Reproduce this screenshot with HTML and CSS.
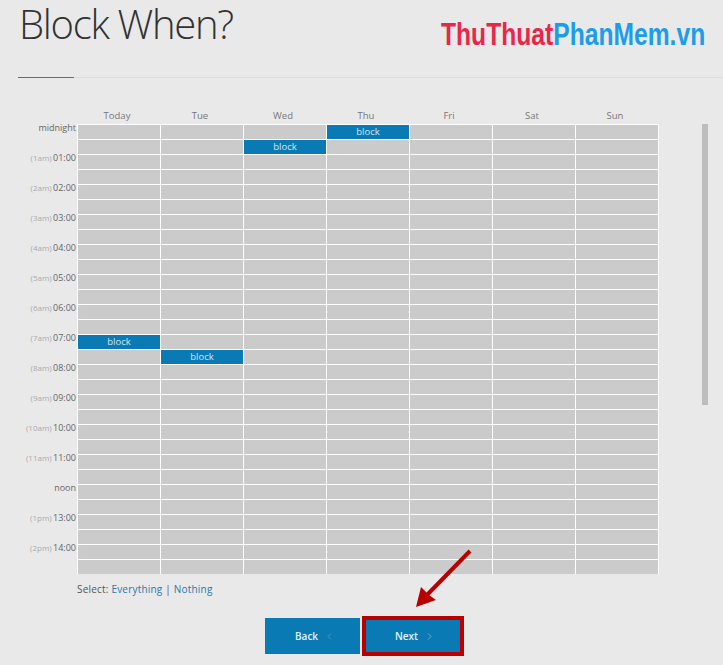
FILE: index.html
```html
<!DOCTYPE html>
<html lang="en">
<head>
<meta charset="utf-8">
<title>Block When?</title>
<link rel="stylesheet" href="styles.css">
</head>
<body>
<header class="head">
  <h1 class="title">Block When?</h1>
  <div class="logo"><span class="logo-red">ThuThuat</span><span class="logo-blue">PhanMem.vn</span></div>
</header>
<main class="sched">
  <div class="days">
    <span>Today</span><span>Tue</span><span>Wed</span><span>Thu</span><span>Fri</span><span>Sat</span><span>Sun</span>
  </div>
  <div class="body">
    <div class="times">
      <div class="t">midnight</div>
      <div class="t"><small>(1am)</small> 01:00</div>
      <div class="t"><small>(2am)</small> 02:00</div>
      <div class="t"><small>(3am)</small> 03:00</div>
      <div class="t"><small>(4am)</small> 04:00</div>
      <div class="t"><small>(5am)</small> 05:00</div>
      <div class="t"><small>(6am)</small> 06:00</div>
      <div class="t"><small>(7am)</small> 07:00</div>
      <div class="t"><small>(8am)</small> 08:00</div>
      <div class="t"><small>(9am)</small> 09:00</div>
      <div class="t"><small>(10am)</small> 10:00</div>
      <div class="t"><small>(11am)</small> 11:00</div>
      <div class="t">noon</div>
      <div class="t"><small>(1pm)</small> 13:00</div>
      <div class="t"><small>(2pm)</small> 14:00</div>
    </div>
    <div class="grid">
      <i></i><i></i><i></i><b>block</b><i></i><i></i><i></i>
      <i></i><i></i><b>block</b><i></i><i></i><i></i><i></i>
      <i></i><i></i><i></i><i></i><i></i><i></i><i></i>
      <i></i><i></i><i></i><i></i><i></i><i></i><i></i>
      <i></i><i></i><i></i><i></i><i></i><i></i><i></i>
      <i></i><i></i><i></i><i></i><i></i><i></i><i></i>
      <i></i><i></i><i></i><i></i><i></i><i></i><i></i>
      <i></i><i></i><i></i><i></i><i></i><i></i><i></i>
      <i></i><i></i><i></i><i></i><i></i><i></i><i></i>
      <i></i><i></i><i></i><i></i><i></i><i></i><i></i>
      <i></i><i></i><i></i><i></i><i></i><i></i><i></i>
      <i></i><i></i><i></i><i></i><i></i><i></i><i></i>
      <i></i><i></i><i></i><i></i><i></i><i></i><i></i>
      <i></i><i></i><i></i><i></i><i></i><i></i><i></i>
      <b>block</b><i></i><i></i><i></i><i></i><i></i><i></i>
      <i></i><b>block</b><i></i><i></i><i></i><i></i><i></i>
      <i></i><i></i><i></i><i></i><i></i><i></i><i></i>
      <i></i><i></i><i></i><i></i><i></i><i></i><i></i>
      <i></i><i></i><i></i><i></i><i></i><i></i><i></i>
      <i></i><i></i><i></i><i></i><i></i><i></i><i></i>
      <i></i><i></i><i></i><i></i><i></i><i></i><i></i>
      <i></i><i></i><i></i><i></i><i></i><i></i><i></i>
      <i></i><i></i><i></i><i></i><i></i><i></i><i></i>
      <i></i><i></i><i></i><i></i><i></i><i></i><i></i>
      <i></i><i></i><i></i><i></i><i></i><i></i><i></i>
      <i></i><i></i><i></i><i></i><i></i><i></i><i></i>
      <i></i><i></i><i></i><i></i><i></i><i></i><i></i>
      <i></i><i></i><i></i><i></i><i></i><i></i><i></i>
      <i></i><i></i><i></i><i></i><i></i><i></i><i></i>
      <i></i><i></i><i></i><i></i><i></i><i></i><i></i>
    </div>
    <div class="scroll"></div>
  </div>
  <p class="select">Select: <a href="#">Everything</a> | <a href="#">Nothing</a></p>
</main>
<nav class="actions">
  <a class="btn" href="#">Back
    <svg class="chev" viewBox="0 0 5 7" width="5" height="7"><path d="M4 .5 1 3.500 4 6.500" fill="none" stroke="#4d8fb5" stroke-width="1"/></svg>
  </a>
  <a class="btn" href="#">Next
    <svg class="chev" viewBox="0 0 5 7" width="5" height="7"><path d="M1 .5 4 3.500 1 6.500" fill="none" stroke="#6fa9cc" stroke-width="1"/></svg>
  </a>
</nav>
<svg class="mark" viewBox="0 0 723 665" width="723" height="665">
  <rect x="364" y="618" width="98" height="36" fill="none" stroke="#b80000" stroke-width="4"/>
  <path d="M470 551 424 598" fill="none" stroke="#b80000" stroke-width="4"/>
  <path d="M416 607 421 587 429 595 436 600Z" fill="#b80000"/>
</svg>
</body>
</html>
```
FILE: styles.css
```css
html, body { margin: 0; padding: 0; }
body {
  width: 723px;
  height: 665px;
  overflow: hidden;
  position: relative;
  background: #e9e9e9;
  font-family: "Open Sans", "Liberation Sans", sans-serif;
  color: #555;
}
.head {
  height: 77px;
  margin-left: 18px;
  border-bottom: 1px solid #dedede;
  position: relative;
}
.head::after {
  content: "";
  position: absolute;
  left: 0;
  bottom: -1px;
  width: 56px;
  height: 1px;
  background: #1a85c0;
}
.title {
  margin: 0;
  padding-left: 1px;
  font-size: 40px;
  line-height: 48px;
  letter-spacing: -1.300px;
  font-weight: 300;
  color: #333;
}
.logo {
  position: absolute;
  left: 423px;
  top: 14px;
  font-family: "Liberation Sans", sans-serif;
  font-weight: 700;
  font-size: 32px;
  line-height: 40px;
  white-space: nowrap;
  transform: scaleX(.77);
  transform-origin: left center;
}
.logo-red { color: #e8264a; }
.logo-blue { color: #1c9dea; }
.sched { padding-top: 28px; }
.days {
  margin-left: 78px;
  width: 581px;
  height: 18px;
  display: grid;
  grid-template-columns: repeat(7, 83px);
  font-size: 9.500px;
  line-height: 20px;
  color: #777;
  text-align: center;
}
.days span { padding-right: 5px; }
.body { display: flex; align-items: flex-start; }
.times { width: 77px; margin-top: -4px; }
.t {
  height: 30px;
  padding-right: 1px;
  box-sizing: border-box;
  font-size: 9px;
  line-height: 15px;
  word-spacing: -1px;
  text-align: right;
  color: #666;
}
.t small { font-size: 8px; color: #aaa; }
.grid {
  width: 581px;
  border-left: 1px solid #fff;
  display: grid;
  grid-template-columns: repeat(7, 83px);
  grid-auto-rows: 15px;
}
.grid i, .grid b {
  display: block;
  box-sizing: border-box;
  border-top: 1px solid #fff;
  border-right: 1px solid #fff;
  background: #cbcbcb;
}
.grid b {
  background: #0a7ab5;
  color: #cfe6f3;
  font-size: 9.500px;
  font-weight: 400;
  line-height: 14px;
  text-align: center;
}
.scroll {
  width: 6px;
  height: 281px;
  margin-left: 43px;
  background: #bdbdbd;
}
.select {
  margin: 8px 0 0 77px;
  font-size: 10px;
  line-height: 14px;
  letter-spacing: .2px;
  color: #555;
}
.select a { color: #2a78a8; text-decoration: none; }
.actions {
  position: absolute;
  left: 265px;
  top: 618px;
  display: flex;
  gap: 5px;
}
.btn {
  width: 95px;
  height: 36px;
  box-sizing: border-box;
  padding-left: 30px;
  display: flex;
  align-items: center;
  gap: 9px;
  background: #0a7ab5;
  color: #e4f2fa;
  font-size: 10px;
  font-weight: 600;
  text-decoration: none;
}
.mark {
  position: absolute;
  left: 0;
  top: 0;
  pointer-events: none;
}
```
